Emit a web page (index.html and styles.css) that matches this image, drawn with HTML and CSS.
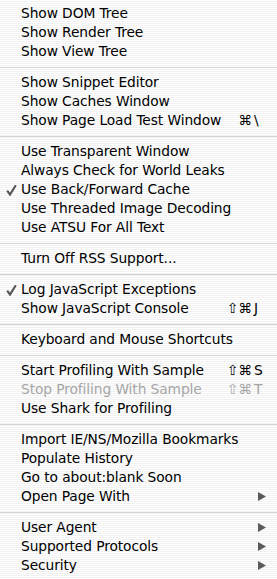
FILE: index.html
```html
<!DOCTYPE html>
<html lang="en">
<head>
    <meta charset="UTF-8">
    <title>Debug</title>
    <link rel="stylesheet" href="styles.css">
</head>
<body>
    <ul class="menu">
        <li class="item"><span class="check"></span><span class="label">Show DOM Tree</span></li>
        <li class="item"><span class="check"></span><span class="label">Show Render Tree</span></li>
        <li class="item"><span class="check"></span><span class="label">Show View Tree</span></li>
        <li class="sep"></li>
        <li class="item"><span class="check"></span><span class="label">Show Snippet Editor</span></li>
        <li class="item"><span class="check"></span><span class="label">Show Caches Window</span></li>
        <li class="item"><span class="check"></span><span class="label">Show Page Load Test Window</span><span class="mods">⌘</span><span class="key">\</span></li>
        <li class="sep"></li>
        <li class="item"><span class="check"></span><span class="label">Use Transparent Window</span></li>
        <li class="item"><span class="check"></span><span class="label">Always Check for World Leaks</span></li>
        <li class="item"><span class="check"><svg width="11" height="12" viewBox="0 0 11 12"><path d="M1.2 6.6 L4 10.6 L9.8 1.2" fill="none" stroke="#555" stroke-width="2.1" stroke-linejoin="miter"/></svg></span><span class="label">Use Back/Forward Cache</span></li>
        <li class="item"><span class="check"></span><span class="label">Use Threaded Image Decoding</span></li>
        <li class="item"><span class="check"></span><span class="label">Use ATSU For All Text</span></li>
        <li class="sep"></li>
        <li class="item"><span class="check"></span><span class="label">Turn Off RSS Support...</span></li>
        <li class="sep"></li>
        <li class="item"><span class="check"><svg width="11" height="12" viewBox="0 0 11 12"><path d="M1.2 6.6 L4 10.6 L9.8 1.2" fill="none" stroke="#555" stroke-width="2.1" stroke-linejoin="miter"/></svg></span><span class="label">Log JavaScript Exceptions</span></li>
        <li class="item"><span class="check"></span><span class="label">Show JavaScript Console</span><span class="mods">⇧⌘</span><span class="key">J</span></li>
        <li class="sep"></li>
        <li class="item"><span class="check"></span><span class="label">Keyboard and Mouse Shortcuts</span></li>
        <li class="sep"></li>
        <li class="item"><span class="check"></span><span class="label">Start Profiling With Sample</span><span class="mods">⇧⌘</span><span class="key">S</span></li>
        <li class="item disabled"><span class="check"></span><span class="label">Stop Profiling With Sample</span><span class="mods">⇧⌘</span><span class="key">T</span></li>
        <li class="item"><span class="check"></span><span class="label">Use Shark for Profiling</span></li>
        <li class="sep"></li>
        <li class="item"><span class="check"></span><span class="label">Import IE/NS/Mozilla Bookmarks</span></li>
        <li class="item"><span class="check"></span><span class="label">Populate History</span></li>
        <li class="item"><span class="check"></span><span class="label">Go to about:blank Soon</span></li>
        <li class="item"><span class="check"></span><span class="label">Open Page With</span><svg class="arrow" width="8" height="9" viewBox="0 0 8 9"><path d="M0 0 L8 4.5 L0 9 Z" fill="#5a5a5a"/></svg></li>
        <li class="sep"></li>
        <li class="item"><span class="check"></span><span class="label">User Agent</span><svg class="arrow" width="8" height="9" viewBox="0 0 8 9"><path d="M0 0 L8 4.5 L0 9 Z" fill="#5a5a5a"/></svg></li>
        <li class="item"><span class="check"></span><span class="label">Supported Protocols</span><svg class="arrow" width="8" height="9" viewBox="0 0 8 9"><path d="M0 0 L8 4.5 L0 9 Z" fill="#5a5a5a"/></svg></li>
        <li class="item"><span class="check"></span><span class="label">Security</span><svg class="arrow" width="8" height="9" viewBox="0 0 8 9"><path d="M0 0 L8 4.5 L0 9 Z" fill="#5a5a5a"/></svg></li>
    </ul>
</body>
</html>
```

FILE: styles.css
```css
body {
    margin: 0;
    background: #fff;
}

.menu {
    list-style: none;
    margin: 0;
    padding: 4px 0;
    width: 277px;
    height: 579px;
    box-sizing: border-box;
    background: repeating-linear-gradient(to bottom, #ffffff 0, #ffffff 1px, #f1f1f1 1px, #f1f1f1 2px);
    font-family: "DejaVu Sans", sans-serif;
    font-size: 13.8px;
    letter-spacing: -0.1px;
    color: #000;
}

.item {
    display: flex;
    align-items: center;
    height: 19px;
    line-height: 19px;
    white-space: nowrap;
}

.check {
    display: flex;
    align-items: center;
    width: 21px;
    padding-left: 6px;
    box-sizing: border-box;
}

.label {
    flex: 1;
}

.mods {
    width: 30px;
    text-align: right;
}

.key {
    width: 23px;
    padding-left: 2px;
}

.arrow {
    margin-right: 11px;
}

.disabled {
    color: #a6a6a6;
}

.sep {
    height: 12px;
    box-sizing: border-box;
    padding-top: 6px;
}

.sep::before {
    content: "";
    display: block;
    height: 1px;
    background: #d4d4d4;
}
```
